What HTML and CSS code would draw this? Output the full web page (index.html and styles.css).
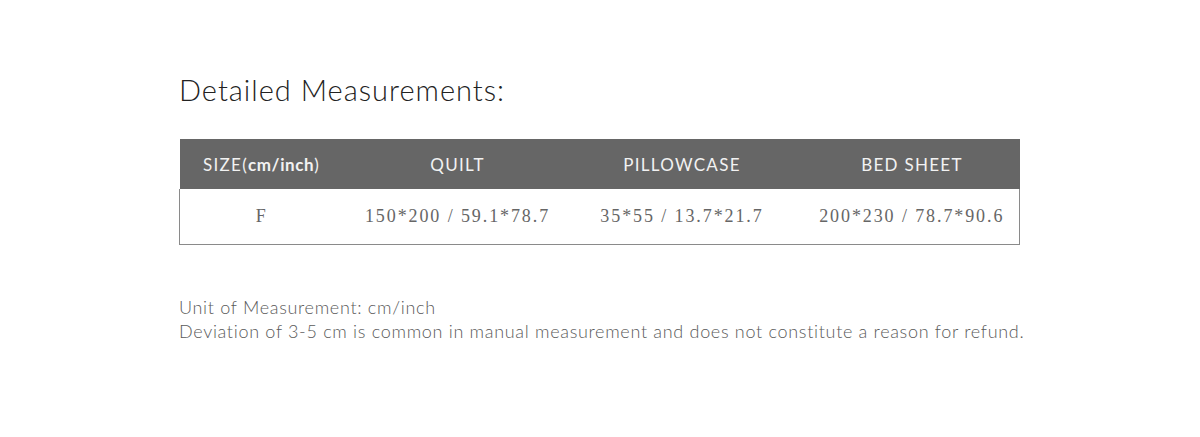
FILE: index.html
```html
<!DOCTYPE html>
<html>
<head>
<meta charset="utf-8">
<link rel="stylesheet" href="styles.css">
</head>
<body>
<main class="page">
  <h1 class="title">Detailed Measurements:</h1>
  <table class="sizes">
    <thead>
      <tr>
        <th class="c1">SIZE(<b>cm/inch</b>)</th>
        <th class="c2">QUILT</th>
        <th class="c3">PILLOWCASE</th>
        <th class="c4">BED SHEET</th>
      </tr>
    </thead>
    <tbody>
      <tr>
        <td class="c1">F</td>
        <td class="c2">150*200 / 59.1*78.7</td>
        <td class="c3">35*55 / 13.7*21.7</td>
        <td class="c4">200*230 / 78.7*90.6</td>
      </tr>
    </tbody>
  </table>
  <div class="notes">
    <p>Unit of Measurement: cm/inch</p>
    <p>Deviation of 3-5 cm is common in manual measurement and does not constitute a reason for refund.</p>
  </div>
</main>
</body>
</html>
```
FILE: styles.css
```css
html, body {
  margin: 0;
  padding: 0;
  background: #ffffff;
}
.page {
  padding: 70px 0 0 179px;
  font-family: Lato, "Open Sans", sans-serif;
}
.title {
  margin: 0;
  font-size: 29px;
  font-weight: 300;
  color: #222222;
  line-height: 40px;
  letter-spacing: 1px;
}
.sizes {
  margin-top: 29px;
  width: 840px;
  border-collapse: collapse;
  table-layout: fixed;
}
.sizes th {
  background: #666666;
  color: #f2f2f2;
  font-family: Lato, sans-serif;
  font-weight: 400;
  font-size: 17px;
  letter-spacing: 1.3px;
  height: 50px;
  padding: 0;
  text-align: center;
}
.sizes th b {
  font-weight: 700;
  letter-spacing: 0.6px;
}
.sizes td {
  height: 55px;
  padding: 0;
  text-align: center;
  font-family: "Liberation Serif", serif;
  font-size: 18px;
  letter-spacing: 1.9px;
  color: #666666;
}
.sizes tbody tr {
  border: 1px solid #8a8a8a;
  border-top: 0;
}
.c1 { width: 164px; }
.c2 { width: 228px; }
.c3 { width: 221px; }
.c4 { width: 215px; }
.sizes .c4 { padding-left: 12px; }
.notes {
  margin-top: 50px;
  color: #5a5a5a;
  font-size: 18px;
  font-weight: 300;
  line-height: 24px;
  letter-spacing: 0.69px;
}
.notes p {
  margin: 0;
}
```
